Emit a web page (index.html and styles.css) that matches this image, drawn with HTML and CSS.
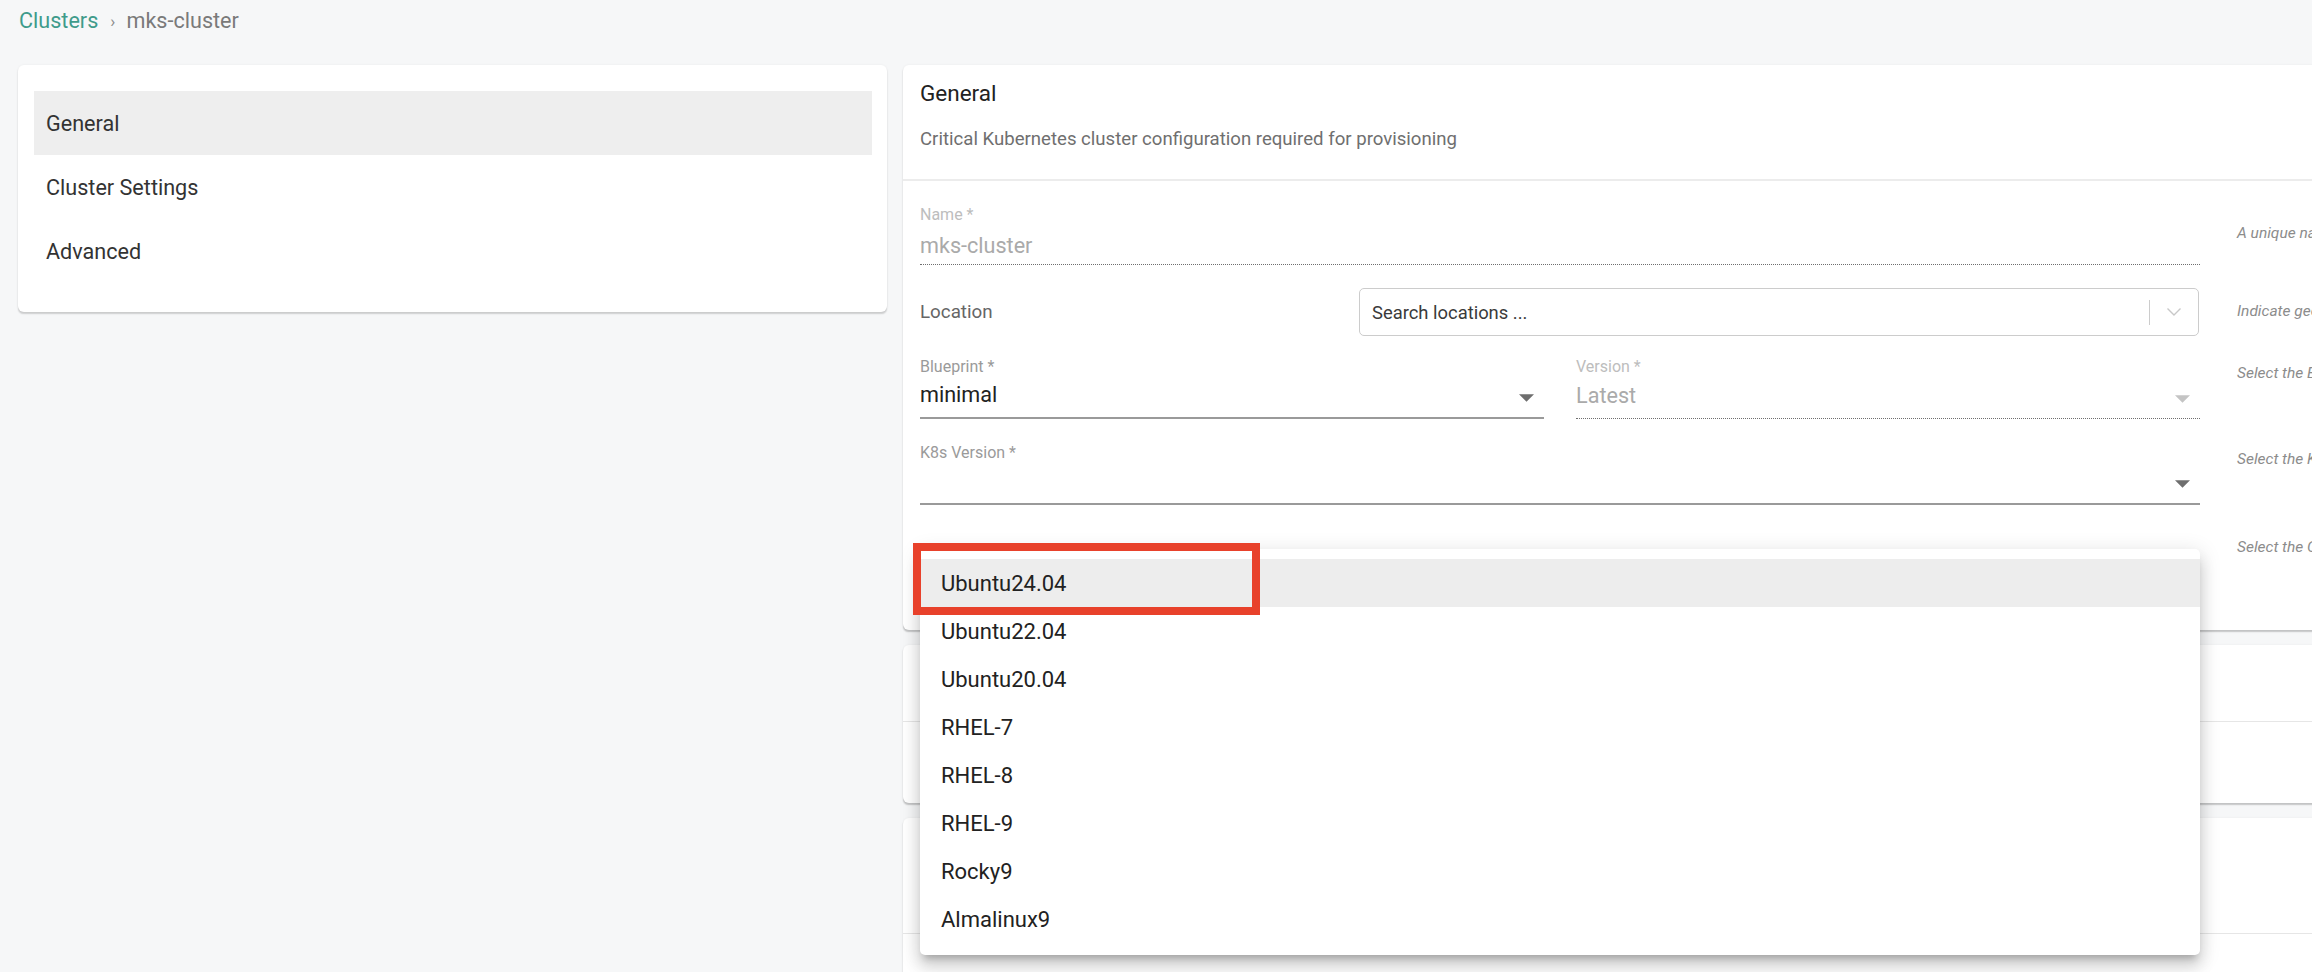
FILE: index.html
```html
<!DOCTYPE html>
<html lang="en">
<head>
<meta charset="utf-8">
<title>mks-cluster</title>
<link rel="stylesheet" href="styles.css">
</head>
<body>
<div class="page">
  <nav class="crumbs">
    <a class="crumb-link">Clusters</a>
    <span class="crumb-sep">›</span>
    <span class="crumb-current">mks-cluster</span>
  </nav>

  <div class="layout">
    <aside class="side-card">
      <div class="side-item active">General</div>
      <div class="side-item">Cluster Settings</div>
      <div class="side-item">Advanced</div>
    </aside>

    <main class="panels">
      <section class="panel panel-general">
        <header class="panel-head">
          <h2 class="panel-title">General</h2>
          <p class="panel-sub">Critical Kubernetes cluster configuration required for provisioning</p>
        </header>
        <div class="panel-body">
          <div class="row row-name">
            <div class="field is-disabled">
              <div class="field-label">Name *</div>
              <div class="field-input dotted"><span class="field-value">mks-cluster</span></div>
            </div>
            <p class="help help-name">A unique name for the cluster</p>
          </div>

          <div class="row row-location">
            <div class="location">
              <div class="location-label">Location</div>
              <div class="search-box">
                <span class="search-placeholder">Search locations ...</span>
                <span class="search-sep"></span>
                <span class="search-chevron">
                  <svg width="16" height="10" viewBox="0 0 16 10"><polyline points="1.5,1.5 8,8 14.5,1.5" fill="none" stroke="#c8c8c8" stroke-width="1.4"/></svg>
                </span>
              </div>
            </div>
            <p class="help help-location">Indicate geographical location of the cluster</p>
          </div>

          <div class="row row-blueprint">
            <div class="pair">
              <div class="field">
                <div class="field-label">Blueprint *</div>
                <div class="field-input solid">
                  <span class="field-value dark">minimal</span>
                  <svg class="drop" width="15" height="8" viewBox="7 10 10 5"><path d="M7 10l5 5 5-5z" fill="#6e6e6e"/></svg>
                </div>
              </div>
              <div class="field is-disabled">
                <div class="field-label">Version *</div>
                <div class="field-input dotted">
                  <span class="field-value">Latest</span>
                  <svg class="drop" width="15" height="8" viewBox="7 10 10 5"><path d="M7 10l5 5 5-5z" fill="#c4c4c4"/></svg>
                </div>
              </div>
            </div>
            <p class="help help-select">Select the Blueprint and its version</p>
          </div>

          <div class="row row-k8s">
            <div class="field">
              <div class="field-label">K8s Version *</div>
              <div class="field-input solid">
                <span class="field-value dark"></span>
                <svg class="drop" width="15" height="8" viewBox="7 10 10 5"><path d="M7 10l5 5 5-5z" fill="#6e6e6e"/></svg>
              </div>
            </div>
            <p class="help help-select">Select the Kubernetes version</p>
          </div>

          <div class="row row-os">
            <div class="field">
              <div class="field-label"></div>
              <div class="field-input solid"><span class="field-value dark"></span></div>
            </div>
            <p class="help help-os">Select the Operating System</p>
          </div>
        </div>
      </section>

      <section class="panel panel-two">
        <div class="panel-head blank-head-short"></div>
        <div class="panel-body blank-body-short"></div>
      </section>

      <section class="panel panel-three">
        <div class="panel-head blank-head-tall"></div>
        <div class="panel-body blank-body-tall"></div>
      </section>
    </main>
  </div>

  <ul class="menu">
    <li class="menu-item selected">Ubuntu24.04</li>
    <li class="menu-item">Ubuntu22.04</li>
    <li class="menu-item">Ubuntu20.04</li>
    <li class="menu-item">RHEL-7</li>
    <li class="menu-item">RHEL-8</li>
    <li class="menu-item">RHEL-9</li>
    <li class="menu-item">Rocky9</li>
    <li class="menu-item">Almalinux9</li>
  </ul>

  <div class="annotation"></div>
</div>
</body>
</html>
```

FILE: styles.css
```css
* { box-sizing: border-box; }

html, body {
  margin: 0;
  padding: 0;
  height: 100%;
  overflow: hidden;
}

body {
  background: #f6f7f8;
  font-family: Roboto, "Liberation Sans", Arial, sans-serif;
  font-size: 21.6px;
  color: #333;
}

.page {
  position: relative;
  width: 2312px;
  height: 972px;
}

/* breadcrumb */
.crumbs {
  display: flex;
  align-items: center;
  padding: 9px 0 0 19px;
  height: 33px;
  line-height: 24px;
  font-size: 21.6px;
}
.crumb-link { color: #3f9b8b; }
.crumb-sep { color: #8a8a8a; font-size: 17px; margin: 0 11px 0 12px; }
.crumb-current { color: #7a7a7a; }

/* layout */
.layout {
  display: flex;
  align-items: flex-start;
  gap: 16px;
  margin-top: 32px;
  padding-left: 18px;
}

.side-card {
  flex: 0 0 869px;
  background: #fff;
  border-radius: 6px;
  padding: 26px 15px 29px 16px;
  box-shadow: 0 2px 1.5px -0.5px rgba(0,0,0,0.16), 0 0 3px rgba(0,0,0,0.05);
}
.side-item {
  height: 64px;
  display: flex;
  align-items: center;
  padding-left: 12px;
  color: #333;
}
.side-item.active { background: #eeeeee; }

.panels {
  flex: 0 0 1430px;
  display: flex;
  flex-direction: column;
  gap: 15px;
}

.panel {
  background: #fff;
  border-radius: 6px;
  overflow: hidden;
  box-shadow: 0 2px 1.5px -0.5px rgba(0,0,0,0.2), 0 0 3px rgba(0,0,0,0.05);
}

.panel-head {
  padding: 15px 17px 29px;
  border-bottom: 2px solid #ececec;
}
.panel-title {
  margin: 0;
  font-size: 22.5px;
  font-weight: 400;
  line-height: 26px;
  color: #222;
}
.panel-sub {
  margin: 22px 0 0;
  font-size: 18.6px;
  line-height: 22px;
  color: #6f6f6f;
}

.panel-body {
  padding: 25px 17px 39px;
}

.row {
  display: grid;
  grid-template-columns: 1280px 420px;
  column-gap: 37px;
  align-items: start;
}
.row-location { margin-top: 23px; }
.row-blueprint { margin-top: 22px; }
.row-k8s { margin-top: 25px; }
.row-os { margin-top: 25px; }

.help {
  margin: 0;
  white-space: nowrap;
  font-style: italic;
  font-size: 15.5px;
  line-height: 18px;
  color: #8c8c8c;
}
.help-name { padding-top: 18px; }
.help-location { padding-top: 14px; }
.help-select { padding-top: 6px; }
.help-os { padding-top: 8px; }

/* fields */
.field-label {
  height: 18px;
  font-size: 16px;
  line-height: 18px;
  color: #9a9a9a;
}
.field.is-disabled .field-label { color: #bdbdbd; }

.field-input {
  display: flex;
  align-items: center;
  margin-top: 5px;
  height: 38px;
  padding-bottom: 8px;
}
.row-name .field-input {
  margin-top: 8px;
  height: 33px;
  padding-bottom: 4px;
}
.field-input.solid { border-bottom: 2px solid #9a9a9a; }
.field-input.dotted { border-bottom: 1px dotted #6f6f6f; }

.field-value {
  flex: 1;
  line-height: 28px;
  height: 28px;
  color: #aaaaaa;
}
.field-value.dark { color: #222; }

.drop {
  flex: 0 0 auto;
  margin: 6px 10px 0 0;
}

.pair {
  display: grid;
  grid-template-columns: 1fr 1fr;
  column-gap: 32px;
}

/* location */
.location {
  display: grid;
  grid-template-columns: 439px 1fr;
  align-items: center;
}
.location-label {
  font-size: 18.8px;
  color: #666;
}
.search-box {
  display: flex;
  align-items: center;
  height: 48px;
  border: 1px solid #cccccc;
  border-radius: 5px;
  padding-left: 12px;
  margin-right: 1px;
}
.search-placeholder {
  flex: 1;
  font-size: 18.4px;
  color: #3a3a3a;
}
.search-sep {
  width: 1px;
  height: 25px;
  background: #cccccc;
}
.search-chevron {
  width: 48px;
  display: flex;
  justify-content: center;
  align-items: center;
}

/* other panels */
.blank-head-short { height: 77px; padding: 0; border-bottom: 1px solid #e6e6e6; }
.blank-body-short { height: 81px; padding: 0; }
.blank-head-tall { height: 116px; padding: 0; border-bottom: 1px solid #e6e6e6; }
.blank-body-tall { height: 120px; padding: 0; }

/* dropdown menu (overlay) */
.menu {
  position: absolute;
  left: 920px;
  top: 549px;
  width: 1280px;
  margin: 0;
  padding: 10px 0 12px;
  list-style: none;
  background: #fff;
  border-radius: 5px;
  box-shadow: 0 7px 7px -4px rgba(0,0,0,0.22), 0 12px 15px 1px rgba(0,0,0,0.12), 0 4px 20px 3px rgba(0,0,0,0.1);
}
.menu-item {
  height: 48px;
  display: flex;
  align-items: center;
  padding-left: 21px;
  color: #222;
  font-size: 22px;
}
.menu-item.selected { background: #ededed; }

/* red annotation box (overlay) */
.annotation {
  position: absolute;
  left: 913px;
  top: 543px;
  width: 347px;
  height: 72px;
  border: 8px solid #e8412b;
}
```
